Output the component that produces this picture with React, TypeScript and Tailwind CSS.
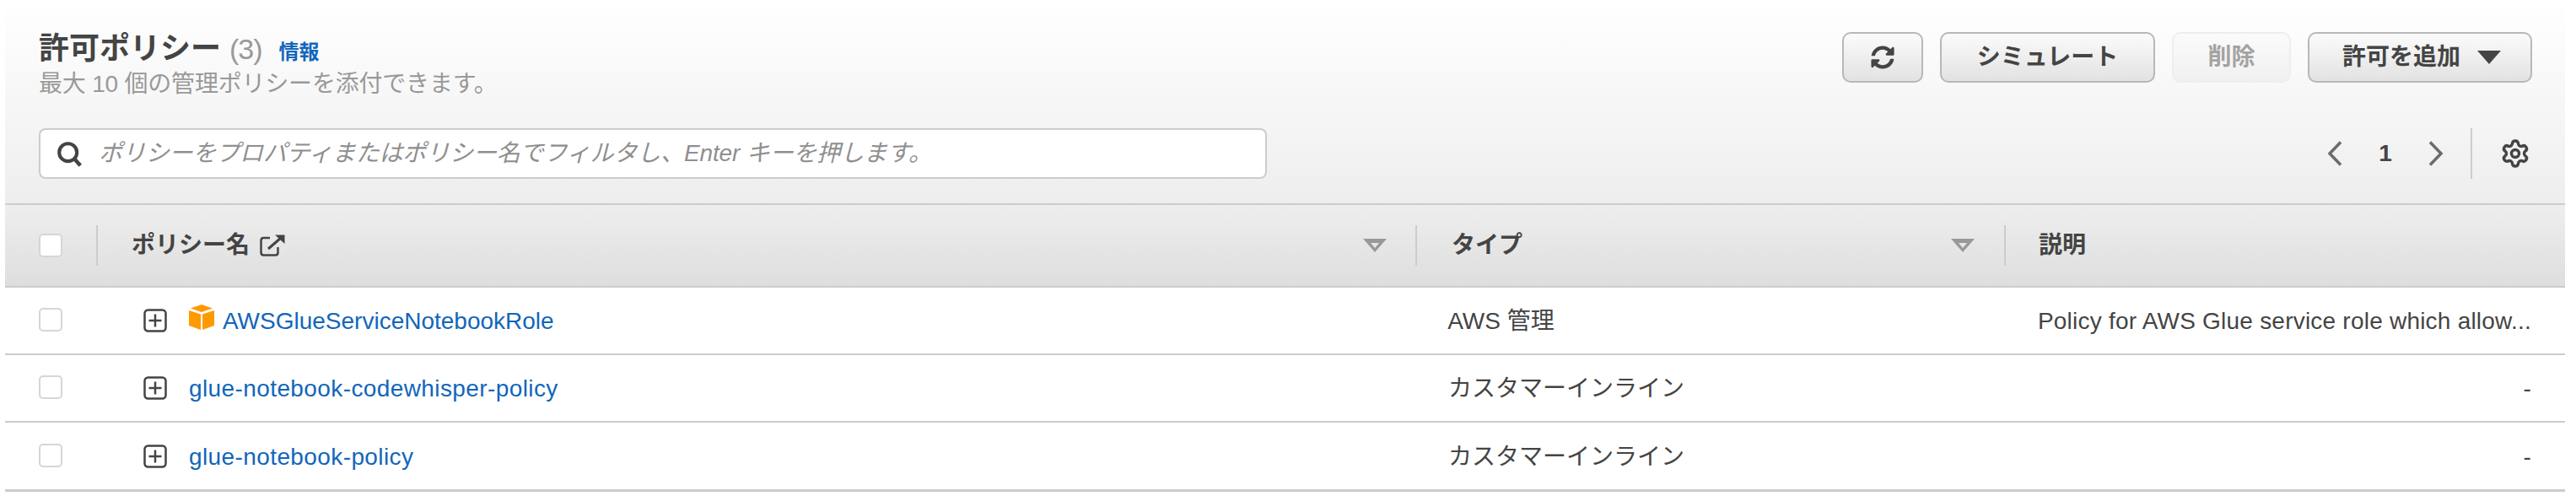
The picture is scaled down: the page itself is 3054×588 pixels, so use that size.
import React from 'react';
import { FaSyncAlt } from 'react-icons/fa';
import { Settings } from 'lucide-react';

const rows = [
  { name: 'AWSGlueServiceNotebookRole', type: 'AWS 管理', description: 'Policy for AWS Glue service role which allow...', managed: true },
  { name: 'glue-notebook-codewhisper-policy', type: 'カスタマーインライン', description: '-', managed: false },
  { name: 'glue-notebook-policy', type: 'カスタマーインライン', description: '-', managed: false },
];

const Button: React.FC<{ className: string; disabled?: boolean; children: React.ReactNode }> = ({ className, disabled, children }) => (
  <button
    disabled={disabled}
    className={`h-[60px] flex items-center justify-center rounded-[10px] border-[2.5px] text-[28px] font-bold bg-linear-to-b ${
      disabled
        ? 'border-[#eeeeee] from-[#fbfbfb] to-[#f0f0f0] text-[#a3a3a3]'
        : 'border-[#b8b8b8] from-[#fbfbfb] to-[#e2e2e2] text-[#444444]'
    } ${className}`}
  >
    {children}
  </button>
);

const SortIcon = () => (
  <svg width="28" height="16" viewBox="0 0 28 16" className="shrink-0">
    <path d="M0 0H28L14 16Z M9 5L14 11L19 5Z" fill="#999999" fillRule="evenodd" />
  </svg>
);

const Checkbox = ({ className }: { className: string }) => (
  <div className={`w-[28px] h-[28px] rounded-[5px] border-[2.5px] border-[#d6d6d6] bg-white ${className}`}></div>
);

const ExpandIcon = () => (
  <svg width="28" height="28" viewBox="0 0 28 28" className="shrink-0">
    <rect x="1.5" y="1.5" width="25" height="25" rx="4" fill="none" stroke="#444444" strokeWidth="2.5" />
    <path d="M14 6.5V21.5M6.5 14H21.5" stroke="#444444" strokeWidth="2.5" />
  </svg>
);

const CubeIcon = () => (
  <svg width="30" height="30" viewBox="0 0 30 30" className="shrink-0">
    <path d="M15 0L28 4.5L15 9L2 4.5Z" fill="#ff9900" />
    <path d="M0 7L14 11.5V30L0 25Z" fill="#ff9900" />
    <path d="M16 11.5L30 7V25L16 30Z" fill="#ff9900" />
  </svg>
);

const App: React.FC = () => {
  return (
    <div className="w-[3054px] h-[588px] bg-white px-[6px] pr-[13px] text-[#444444] [font-family:'Liberation_Sans','Noto_Sans_CJK_JP',sans-serif]">
      {/* Header */}
      <div className="h-[241px] bg-linear-to-b from-white to-[#eeeeee] pl-[40px] pr-[39px] pt-[38px]">
        <div className="flex justify-between items-start h-[114px]">
          <div className="-mt-[1px]">
            <div className="flex items-baseline h-[42px] leading-[42px]">
              <h2 className="text-[36px] font-bold">許可ポリシー</h2>
              <span className="text-[34px] tracking-[-1px] text-[#999999] ml-[10px]">(3)</span>
              <a className="text-[24px] font-bold text-[#1166bb] ml-[20px]">情報</a>
            </div>
            <p className="text-[28px] tracking-[-0.2px] leading-[38px] text-[#999999] mt-[2px]">最大 10 個の管理ポリシーを添付できます。</p>
          </div>
          <div className="flex gap-[20px]">
            <Button className="w-[96px]">
              <FaSyncAlt size={28} />
            </Button>
            <Button className="w-[255px]">シミュレート</Button>
            <Button className="w-[141px]" disabled>削除</Button>
            <Button className="w-[266px] gap-[20px] pl-[4px]">
              許可を追加
              <svg width="28" height="16" viewBox="0 0 28 16">
                <path d="M0 0H28L14 16Z" fill="#444444" />
              </svg>
            </Button>
          </div>
        </div>

        {/* Filter and pagination */}
        <div className="flex items-center justify-between h-[60px]">
          <div className="w-[1456px] h-[60px] flex items-center gap-[19px] rounded-[8px] border-[2.5px] border-[#cccccc] bg-white pl-[19px]">
            <svg width="31" height="31" viewBox="0 0 34 34" className="shrink-0">
              <circle cx="15" cy="15" r="11.5" fill="none" stroke="#444444" strokeWidth="4.5" />
              <path d="M23 23L31 32" stroke="#444444" strokeWidth="5" />
            </svg>
            <span className="text-[28px] tracking-[-0.15px] italic text-[#8f8f8f]">ポリシーをプロパティまたはポリシー名でフィルタし、Enter キーを押します。</span>
          </div>
          <div className="flex items-center h-[60px]">
            <svg width="18" height="30" viewBox="0 0 18 30">
              <path d="M16 1.5L3 15L16 28.5" fill="none" stroke="#6b6b6b" strokeWidth="3.5" />
            </svg>
            <span className="w-[102px] text-center text-[28px] font-bold">1</span>
            <svg width="18" height="30" viewBox="0 0 18 30">
              <path d="M2 1.5L15 15L2 28.5" fill="none" stroke="#6b6b6b" strokeWidth="3.5" />
            </svg>
            <div className="w-[2px] h-[60px] bg-[#cccccc] ml-[32px] mr-[33px]"></div>
            <Settings size={36} strokeWidth={2.3} className="text-[#444444] mr-[2px]" />
          </div>
        </div>
      </div>

      {/* Table head */}
      <div className="h-[100px] flex items-center border-y-[2.5px] border-[#cccccc] bg-linear-to-b from-[#eeeeee] to-[#dedede]">
        <div className="w-[110px] h-[48px] flex items-center pl-[40px] border-r-2 border-[#cccccc]">
          <Checkbox className="" />
        </div>
        <div className="w-[1562px] h-[48px] flex items-center justify-between pl-[40px] pr-[34px]">
          <div className="flex items-center gap-[12px]">
            <span className="text-[28px] font-bold">ポリシー名</span>
            <svg width="30" height="26" viewBox="0 0 30 26">
              <path d="M12 4H4.5Q1.5 4 1.5 7V21.5Q1.5 24.5 4.5 24.5H18.5Q21.5 24.5 21.5 21.5V15" fill="none" stroke="#444444" strokeWidth="2.5" />
              <path d="M10 17L25 4" stroke="#444444" strokeWidth="3" />
              <path d="M18 0.5H29.5V11Z" fill="#444444" />
            </svg>
          </div>
          <SortIcon />
        </div>
        <div className="w-[698px] h-[48px] flex items-center justify-between pl-[41px] pr-[35px] border-l-2 border-[#cccccc]">
          <span className="text-[28px] font-bold">タイプ</span>
          <SortIcon />
        </div>
        <div className="flex-1 h-[48px] flex items-center pl-[39px] border-l-2 border-[#cccccc]">
          <span className="text-[28px] font-bold">説明</span>
        </div>
      </div>

      {/* Rows */}
      {rows.map((row, i) => (
        <div
          key={row.name}
          className={`flex items-center h-[80px] ${i === rows.length - 1 ? 'border-b-[3.5px] h-[82px]' : 'border-b-2'} border-[#cccccc] text-[28px]`}
        >
          <div className="w-[109px] flex items-center pl-[40px]">
            <Checkbox className="-mt-[2px]" />
          </div>
          <div className="w-[1564px] flex items-center pl-[55px]">
            <ExpandIcon />
            <div className="flex items-center gap-[10px] ml-[26px]">
              {row.managed && <div className="-mt-[8px]"><CubeIcon /></div>}
              <a className={`text-[#1166bb] pt-[2px] ${row.managed ? '' : 'tracking-[0.4px]'}`}>{row.name}</a>
            </div>
          </div>
          <div className="w-[698px] pl-[38px] pt-[2px]">{row.type}</div>
          <div className="flex-1 pl-[40px] pr-[40px] pt-[2px] text-right whitespace-nowrap tracking-[0.22px]">{row.description}</div>
        </div>
      ))}
    </div>
  );
};

export default App;
